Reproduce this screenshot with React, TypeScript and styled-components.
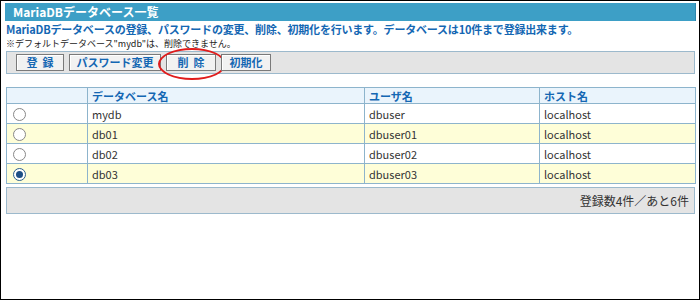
import React from 'react'
import styled, { createGlobalStyle } from 'styled-components'

const GlobalStyle = createGlobalStyle`
  html, body {
    margin: 0;
    padding: 0;
    background: #fff;
  }
  body {
    font-family: "Noto Sans CJK JP", "Noto Sans", sans-serif;
    font-size: 12px;
    color: #222;
  }
`

// Styled Components
const Frame = styled.div`
  width: 700px;
  height: 300px;
  box-sizing: border-box;
  border: 1px solid #000;
  padding: 2px 3px 0 4px;
  display: flex;
  flex-direction: column;
`
const TitleBar = styled.div`
  height: 18px;
  background: #3d9fc6;
  color: #fff;
  font-weight: bold;
  font-size: 12px;
  line-height: 18px;
  padding-left: 8px;
  border-right: 1px solid #2e86ad;
`
const Lead = styled.div`
  color: #1467b3;
  font-weight: bold;
  font-size: 11px;
  letter-spacing: -0.2px;
  line-height: 16px;
  padding-left: 1px;
  white-space: nowrap;
`
const Note = styled.div`
  font-size: 9px;
  line-height: 13px;
  color: #222;
  padding-left: 1px;
  white-space: nowrap;
`
const Toolbar = styled.div`
  margin: 1px 1px 0 1px;
  height: 23px;
  box-sizing: border-box;
  background: #e4e4e4;
  border: 1px solid #9cb9cc;
  display: flex;
  align-items: center;
  gap: 5px;
  padding-left: 9px;
`
const Btn = styled.button<{ $w: number; $spaced?: boolean }>`
  position: relative;
  width: ${(p) => p.$w}px;
  height: 17px;
  box-sizing: border-box;
  padding: 0;
  background: #f2f2f2;
  border: 1px solid #7a7a7a;
  box-shadow: inset 1px 1px 0 #fff;
  color: #1467b3;
  font-family: inherit;
  font-weight: bold;
  font-size: 11px;
  line-height: 15px;
  white-space: nowrap;
  letter-spacing: ${(p) => (p.$spaced ? '5px' : '0')};
  text-indent: ${(p) => (p.$spaced ? '5px' : '0')};
`
const Circle = styled.span`
  position: absolute;
  left: -9px;
  top: -7px;
  width: 64px;
  height: 28px;
  border: 2px solid #e01b1b;
  border-radius: 50%;
  pointer-events: none;
  text-indent: 0;
`
const Grid = styled.table`
  margin: 13px 1px 0 1px;
  width: 690px;
  border-collapse: collapse;
  table-layout: fixed;
  & td, & th {
    border: 1px solid #8db4cc;
    height: 19px;
    padding: 0 0 0 4px;
    font-size: 11px;
    line-height: 14px;
    text-align: left;
    color: #333;
  }
`
const HeadRow = styled.tr`
  background: #eaf4fc;
  & th {
    height: 15px;
    color: #1467b3;
    font-weight: bold;
    font-size: 11px;
    line-height: 14px;
  }
`
const Row = styled.tr<{ $alt: boolean }>`
  background: ${(p) => (p.$alt ? '#fefed8' : '#fff')};
`
const Radio = styled.span<{ $on: boolean }>`
  display: inline-block;
  vertical-align: middle;
  width: 11px;
  height: 11px;
  margin-left: 2px;
  border-radius: 50%;
  border: 1px solid ${(p) => (p.$on ? '#2c5f8c' : '#888')};
  background: #fff;
  position: relative;
  &::after {
    content: '';
    display: ${(p) => (p.$on ? 'block' : 'none')};
    position: absolute;
    left: 2px;
    top: 2px;
    width: 7px;
    height: 7px;
    border-radius: 50%;
    background: #1d4f86;
  }
`
const Footer = styled.div`
  margin: 3px 1px 0 1px;
  height: 27px;
  box-sizing: border-box;
  background: #e4e4e4;
  border: 1px solid #9cb9cc;
  display: flex;
  align-items: center;
  justify-content: flex-end;
  padding-right: 5px;
  font-size: 12px;
  color: #333;
`

const rows = [
  { db: 'mydb', user: 'dbuser', host: 'localhost', on: false },
  { db: 'db01', user: 'dbuser01', host: 'localhost', on: false },
  { db: 'db02', user: 'dbuser02', host: 'localhost', on: false },
  { db: 'db03', user: 'dbuser03', host: 'localhost', on: true },
]

// COMPONENT
const App: React.FC = () => {
  return (
    <>
      <GlobalStyle />
      <Frame>
        <TitleBar>MariaDBデータベース一覧</TitleBar>
        <Lead>
          MariaDBデータベースの登録、パスワードの変更、削除、初期化を行います。データベースは10件まで登録出来ます。
        </Lead>
        <Note>※デフォルトデータベース"mydb"は、削除できません。</Note>
        <Toolbar>
          <Btn $w={48} $spaced>
            登録
          </Btn>
          <Btn $w={92}>パスワード変更</Btn>
          <Btn $w={50} $spaced>
            削除
            <Circle />
          </Btn>
          <Btn $w={50}>初期化</Btn>
        </Toolbar>
        <Grid>
          <colgroup>
            <col style={{ width: 81 }} />
            <col style={{ width: 277 }} />
            <col style={{ width: 175 }} />
            <col />
          </colgroup>
          <thead>
            <HeadRow>
              <th />
              <th>データベース名</th>
              <th>ユーザ名</th>
              <th>ホスト名</th>
            </HeadRow>
          </thead>
          <tbody>
            {rows.map((r, i) => (
              <Row key={r.db} $alt={i % 2 === 1}>
                <td>
                  <Radio $on={r.on} />
                </td>
                <td>{r.db}</td>
                <td>{r.user}</td>
                <td>{r.host}</td>
              </Row>
            ))}
          </tbody>
        </Grid>
        <Footer>登録数4件／あと6件</Footer>
      </Frame>
    </>
  )
}
export default App
